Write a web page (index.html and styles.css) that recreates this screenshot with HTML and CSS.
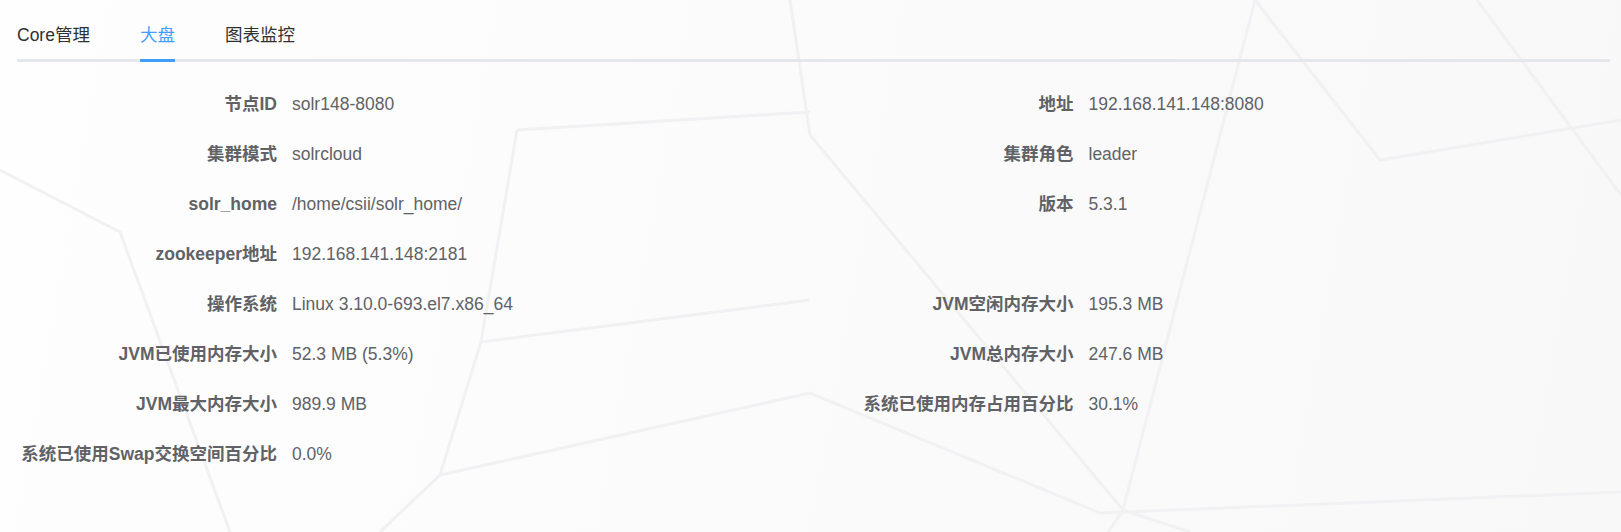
FILE: index.html
```html
<!DOCTYPE html>
<html>
<head>
<meta charset="utf-8">
<title>大盘</title>
<link rel="stylesheet" href="styles.css">
</head>
<body>

<!-- faint polygon lines behind the page -->
<svg class="bg" viewBox="0 0 1621 532" preserveAspectRatio="none">
  <g stroke="#f1f1f3" stroke-width="3" fill="none">
    <polyline points="1255,0 1123,510 1108,532"/>
    <polyline points="1477,0 1621,195"/>
    <polyline points="1100,513 1621,492"/>
    <polyline points="810,135 1123,510 1190,532"/>
    <polyline points="517,130 481,342 440,475 380,532"/>
    <polyline points="517,130 810,112"/>
    <polyline points="481,342 810,300"/>
    <polyline points="440,475 810,393 1100,513"/>
    <polyline points="0,170 120,232 230,532"/>
    <polyline points="790,0 810,135"/>
    <polyline points="1255,0 1380,160 1621,120"/>
  </g>
</svg>

<div class="page">
  <div class="tabs">
    <div class="tab">Core管理</div>
    <div class="tab active">大盘</div>
    <div class="tab">图表监控</div>
  </div>

  <div class="info">
    <div class="item"><span class="label">节点ID</span><span class="value">solr148-8080</span></div>
    <div class="item"><span class="label">地址</span><span class="value">192.168.141.148:8080</span></div>

    <div class="item"><span class="label">集群模式</span><span class="value">solrcloud</span></div>
    <div class="item"><span class="label">集群角色</span><span class="value">leader</span></div>

    <div class="item"><span class="label">solr_home</span><span class="value">/home/csii/solr_home/</span></div>
    <div class="item"><span class="label">版本</span><span class="value">5.3.1</span></div>

    <div class="item"><span class="label">zookeeper地址</span><span class="value">192.168.141.148:2181</span></div>
    <div class="item"></div>

    <div class="item"><span class="label">操作系统</span><span class="value">Linux 3.10.0-693.el7.x86_64</span></div>
    <div class="item"><span class="label">JVM空闲内存大小</span><span class="value">195.3 MB</span></div>

    <div class="item"><span class="label">JVM已使用内存大小</span><span class="value">52.3 MB (5.3%)</span></div>
    <div class="item"><span class="label">JVM总内存大小</span><span class="value">247.6 MB</span></div>

    <div class="item"><span class="label">JVM最大内存大小</span><span class="value">989.9 MB</span></div>
    <div class="item"><span class="label">系统已使用内存占用百分比</span><span class="value">30.1%</span></div>

    <div class="item"><span class="label">系统已使用Swap交换空间百分比</span><span class="value">0.0%</span></div>
    <div class="item"></div>
  </div>
</div>

</body>
</html>
```

FILE: styles.css
```css
html, body {
    height: 100%;
}

body {
    margin: 0;
    font-family: "Liberation Sans", Arial, "Noto Sans CJK SC", sans-serif;
    font-size: 17.5px;
    color: #606266;
    background: linear-gradient(100deg, #fefefe 0%, #fbfbfc 45%, #f8f8f9 100%);
    overflow: hidden;
    position: relative;
}

.bg {
    position: absolute;
    left: 0;
    top: 0;
    width: 100%;
    height: 100%;
    z-index: 0;
}

.page {
    position: relative;
    z-index: 1;
    padding: 9px 11px 0 17px;
}

/* tabs */
.tabs {
    display: flex;
    gap: 50px;
    border-bottom: 3px solid #e4e7ed;
}

.tab {
    height: 50px;
    padding-top: 3px;
    line-height: 47px;
    color: #303133;
    box-sizing: border-box;
}

.tab.active {
    color: #409eff;
    border-bottom: 3px solid #409eff;
    margin-bottom: -3px;
    height: 53px;
}

/* info form */
.info {
    display: grid;
    grid-template-columns: 1fr 1fr;
    margin-top: 17px;
}

.item {
    display: flex;
    height: 50px;
    line-height: 50px;
}

.label {
    width: 275px;
    flex: none;
    box-sizing: border-box;
    padding-right: 15px;
    text-align: right;
    font-weight: bold;
    white-space: nowrap;
}

.value {
    white-space: nowrap;
}
```
